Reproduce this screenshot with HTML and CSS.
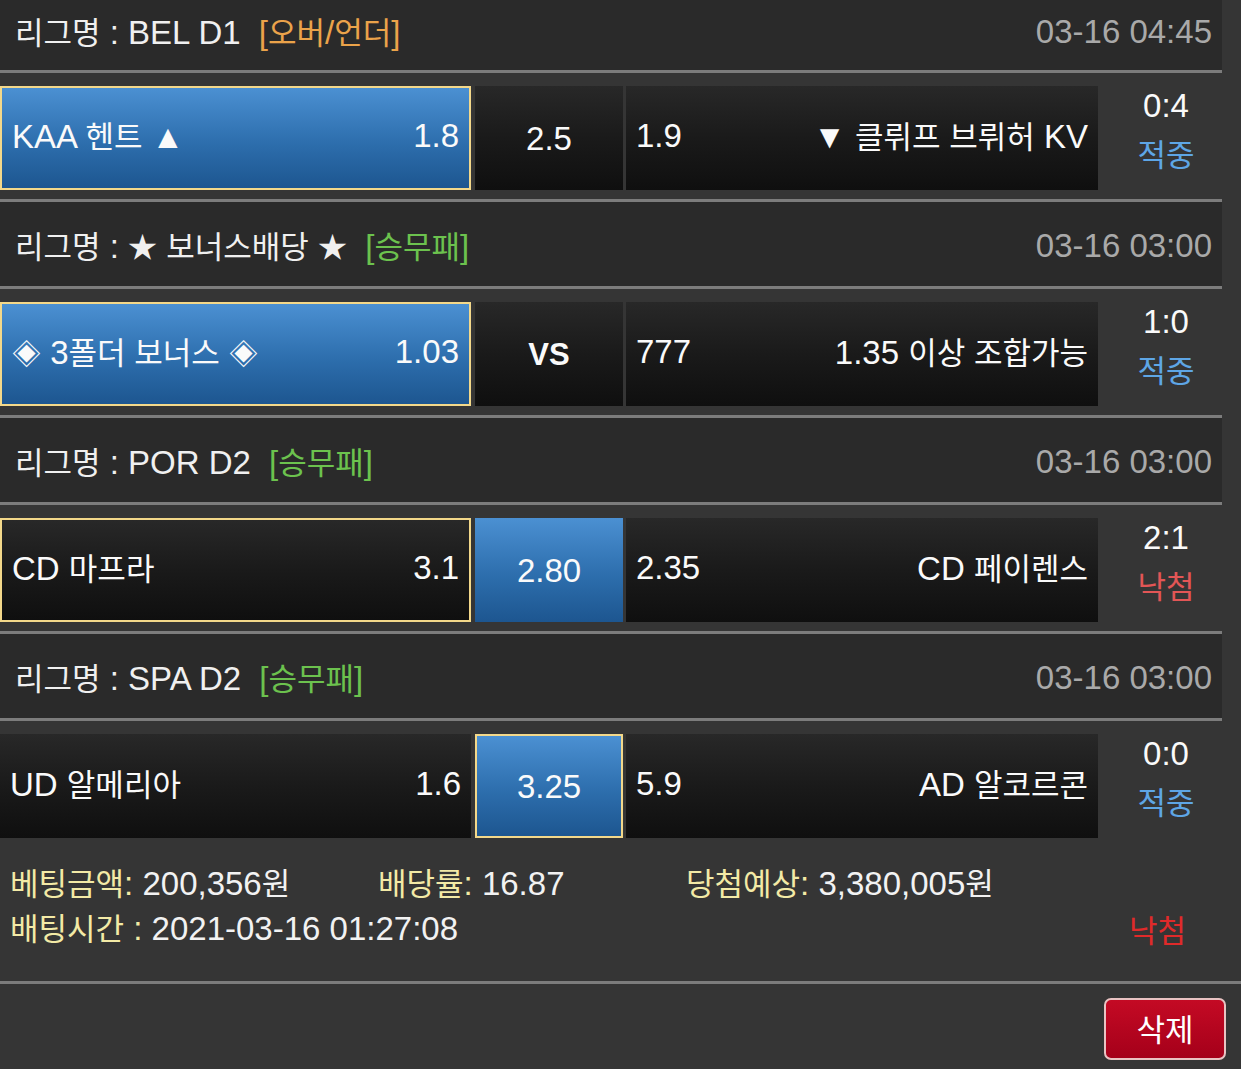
FILE: index.html
```html
<!DOCTYPE html>
<html lang="ko">
<head>
<meta charset="utf-8">
<title>배팅내역</title>
<link rel="stylesheet" href="styles.css">
</head>
<body>
<div class="page">
  <div class="list">
    <div class="league first">
      <div class="league-name"><span class="k">리그명</span> : BEL D1 <span class="tag orange">[<span class="k">오버</span>/<span class="k">언더</span>]</span></div>
      <div class="league-time">03-16 04:45</div>
    </div>
    <div class="match">
      <div class="cell home blue picked"><span>KAA <span class="k">헨트</span> ▲</span><span>1.8</span></div>
      <div class="cell draw dark">2.5</div>
      <div class="cell away dark"><span>1.9</span><span>▼ <span class="k">클뤼프 브뤼허</span> KV</span></div>
      <div class="result"><div class="score">0:4</div><div class="status win k">적중</div></div>
    </div>

    <div class="league">
      <div class="league-name"><span class="k">리그명</span> : <span class="star">★</span> <span class="k">보너스배당</span> <span class="star">★</span> <span class="tag green">[<span class="k">승무패</span>]</span></div>
      <div class="league-time">03-16 03:00</div>
    </div>
    <div class="match">
      <div class="cell home blue picked"><span><span class="k sym">◈</span> 3<span class="k">폴더 보너스</span> <span class="k sym">◈</span></span><span>1.03</span></div>
      <div class="cell draw dark vs">VS</div>
      <div class="cell away dark"><span>777</span><span>1.35 <span class="k">이상 조합가능</span></span></div>
      <div class="result"><div class="score">1:0</div><div class="status win k">적중</div></div>
    </div>

    <div class="league">
      <div class="league-name"><span class="k">리그명</span> : POR D2 <span class="tag green">[<span class="k">승무패</span>]</span></div>
      <div class="league-time">03-16 03:00</div>
    </div>
    <div class="match">
      <div class="cell home dark picked"><span>CD <span class="k">마프라</span></span><span>3.1</span></div>
      <div class="cell draw blue">2.80</div>
      <div class="cell away dark"><span>2.35</span><span>CD <span class="k">페이렌스</span></span></div>
      <div class="result"><div class="score">2:1</div><div class="status lose k">낙첨</div></div>
    </div>

    <div class="league">
      <div class="league-name"><span class="k">리그명</span> : SPA D2 <span class="tag green">[<span class="k">승무패</span>]</span></div>
      <div class="league-time">03-16 03:00</div>
    </div>
    <div class="match last">
      <div class="cell home dark"><span>UD <span class="k">알메리아</span></span><span>1.6</span></div>
      <div class="cell draw blue picked">3.25</div>
      <div class="cell away dark"><span>5.9</span><span>AD <span class="k">알코르콘</span></span></div>
      <div class="result"><div class="score">0:0</div><div class="status win k">적중</div></div>
    </div>
  </div>

  <div class="summary">
    <div class="sum-line">
      <div class="sum-item w1"><span class="lbl"><span class="k">베팅금액</span>:</span> 200,356<span class="k">원</span></div>
      <div class="sum-item w2"><span class="lbl"><span class="k">배당률</span>:</span> 16.87</div>
      <div class="sum-item"><span class="lbl"><span class="k">당첨예상</span>:</span> 3,380,005<span class="k">원</span></div>
    </div>
    <div class="sum-line between">
      <div class="sum-item"><span class="lbl"><span class="k">배팅시간</span> :</span> 2021-03-16 01:27:08</div>
      <div class="final-status k">낙첨</div>
    </div>
  </div>

  <div class="actions">
    <button class="delete-btn"><span class="k">삭제</span></button>
  </div>
</div>
</body>
</html>
```

FILE: styles.css
```css
html, body {
  margin: 0;
  padding: 0;
  background: #353535;
}
body {
  font-family: "Liberation Sans", Arial, "Noto Sans CJK KR", sans-serif;
  color: #f2f2f2;
  overflow: hidden;
}
.k {
  font-family: "Noto Sans CJK KR", sans-serif;
  font-size: 31px;
}
.k.sym {
  font-size: 29px;
}
.star {
  font-size: 29px;
}
.page {
  width: 1241px;
  height: 1069px;
  background: #353535;
}
.list {
  width: 1222px;
}
.league {
  height: 87px;
  background: #2a2a2a;
  border-bottom: 3px solid #7c7c7c;
  display: flex;
  align-items: center;
  justify-content: space-between;
  padding: 4px 10px 0 15px;
  box-sizing: border-box;
  font-size: 33px;
  line-height: 40px;
}
.league.first {
  height: 73px;
  padding-top: 0;
  padding-bottom: 6px;
}
.league-name { color: #f0f0f0; }
.tag { margin-left: 9px; }
.tag.orange { color: #eba34a; }
.tag.green { color: #6cc24e; }
.league-time { color: #a9a9a9; }

.match {
  height: 129px;
  display: flex;
  align-items: flex-start;
  padding-top: 13px;
  box-sizing: border-box;
  border-bottom: 3px solid #7c7c7c;
  background: #353535;
}
.match.last {
  border-bottom: none;
  height: 117px;
}
.cell {
  height: 104px;
  box-sizing: border-box;
  display: flex;
  align-items: center;
  font-size: 33px;
  line-height: 40px;
  color: #fafafa;
  padding-bottom: 4px;
}
.cell.home {
  width: 471px;
  justify-content: space-between;
  padding-left: 10px;
  padding-right: 10px;
}
.cell.draw {
  width: 148px;
  margin-left: 4px;
  justify-content: center;
  padding-top: 2px;
  padding-bottom: 0;
}
.cell.draw.vs { font-weight: bold; font-size: 31px; }
.cell.away {
  width: 472px;
  margin-left: 3px;
  justify-content: space-between;
  padding-left: 10px;
  padding-right: 10px;
}
.cell.blue {
  background: linear-gradient(#4b90d2, #2d6ead 55%, #1d5690);
}
.cell.dark {
  background: linear-gradient(#282828, #1a1a1a 50%, #0f0f0f);
}
.cell.picked {
  border: 2px solid #f3d88a;
}

.result {
  width: 124px;
  box-sizing: border-box;
  padding-left: 12px;
  display: flex;
  flex-direction: column;
  align-items: center;
  font-size: 33px;
  line-height: 47px;
  margin-top: -4px;
}
.score { color: #fafafa; }
.status.win { color: #5ea6e6; }
.status.lose { color: #e35656; }

.summary {
  height: 146px;
  box-sizing: border-box;
  padding: 23px 55px 0 10px;
  border-bottom: 3px solid #7c7c7c;
  font-size: 33px;
  line-height: 45px;
}
.summary .k { line-height: 1; }
.sum-line { display: flex; height: 45px; align-items: center; }
.sum-line.between { justify-content: space-between; }
.sum-item.w1 { width: 368px; }
.sum-item.w2 { width: 308px; }
.lbl { color: #f3eaa6; }
.final-status { color: #e02a2a; }

.actions {
  display: flex;
  justify-content: flex-end;
  padding: 14px 15px 0 0;
}
.delete-btn {
  width: 122px;
  height: 62px;
  border: 2px solid #e9c3c3;
  border-radius: 7px;
  background: linear-gradient(#c40a24, #a5001a);
  color: #ffffff;
  font-family: "Liberation Sans", "Noto Sans CJK KR", sans-serif;
  font-size: 30px;
  line-height: 40px;
  padding: 0;
}
```
